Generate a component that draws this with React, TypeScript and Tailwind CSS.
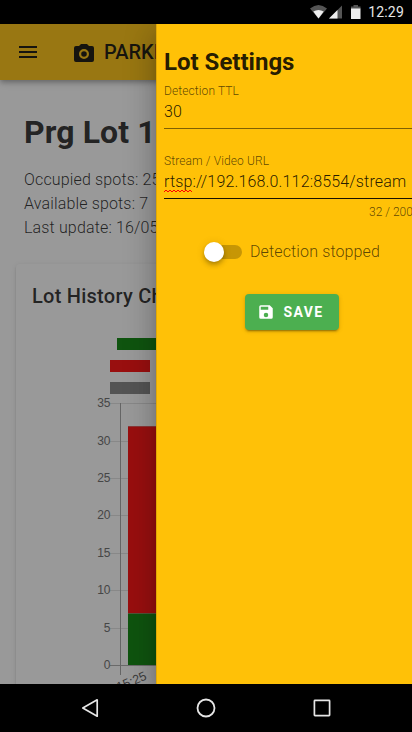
import React from 'react';

const ticks = [35, 30, 25, 20, 15, 10, 5, 0];
const yOf = (v: number) => Math.round(401 - v * 7.48) + 0.5;

function StatusBar() {
  return (
    <div className="flex h-6 shrink-0 items-center justify-end bg-black pr-2 text-[#e6e6e6]">
      <svg className="-mr-px" width="60" height="24" viewBox="0 0 60 24">
        <path d="M1 8.500Q9.500 1.500 18 8.500L9.500 18.500Z" fill="#555" />
        <path d="M4.300 11.500Q9.500 8.500 14.700 11.500L9.500 18.500Z" fill="#eee" />
        <path d="M20 18.500L33 5.500V18.500Z" fill="#555" />
        <path d="M20 18.500L28.500 10V18.500Z" fill="#eee" />
        <path d="M42 6.500H44.500V5H49V6.500H51.500V9H42Z" fill="#555" />
        <path d="M42 8.500H51.500V19H42Z" fill="#eee" />
      </svg>
      <span className="text-[14px] leading-6 tracking-[0.2px]">12:29</span>
    </div>
  );
}

function HistoryChart() {
  return (
    <svg className="block" width="364" height="420" viewBox="0 0 364 420">
      <rect x="85" y="74" width="40" height="12" fill="#008000" />
      <rect x="78" y="96" width="40" height="12" fill="#ff0000" />
      <rect x="78" y="118" width="40" height="12" fill="#808080" />
      {ticks.map((v) => (
        <g key={v}>
          <line x1="78" x2="364" y1={yOf(v)} y2={yOf(v)} stroke={v === 0 ? '#a8a8a8' : '#e0e0e0'} />
          <text x="78.500" y={yOf(v) + 3.5} textAnchor="end" fontSize="12" fill="#666" fontFamily="'Liberation Sans', Arial, sans-serif">{v}</text>
        </g>
      ))}
      <line x1="88.500" x2="88.500" y1="139" y2="411" stroke="#a0a0a0" />
      <rect x="96" y="162" width="90" height="187" fill="#ff0000" />
      <rect x="96" y="349" width="90" height="52" fill="#008000" />
      <path d="M96 162.500H186M96 349.500H186" stroke="#d08080" strokeOpacity=".6" />
      <text transform="translate(115.500 415) rotate(-23)" textAnchor="end" fontSize="12.500" fill="#555" fontFamily="'Liberation Sans', Arial, sans-serif">15:25</text>
    </svg>
  );
}

function LotPage() {
  return (
    <div className="h-full w-[412px] overflow-hidden bg-white text-black/[.87]">
      <header className="relative flex h-14 items-center bg-[#ffc107] pl-4 text-black/95 shadow-[0_2px_4px_-1px_rgba(0,0,0,.2),0_4px_5px_0_rgba(0,0,0,.14),0_1px_10px_0_rgba(0,0,0,.12)]">
        <svg width="24" height="24" viewBox="0 0 24 24" fill="currentColor"><path d="M3 6h18v2H3V6m0 5h18v2H3v-2m0 5h18v2H3v-2z" /></svg>
        <svg className="ml-8" width="24" height="24" viewBox="0 0 24 24" fill="currentColor">
          <path d="M4 4h3l2-2h6l2 2h3a2 2 0 0 1 2 2v12a2 2 0 0 1-2 2H4a2 2 0 0 1-2-2V6a2 2 0 0 1 2-2m8 3a5 5 0 0 0-5 5 5 5 0 0 0 5 5 5 5 0 0 0 5-5 5 5 0 0 0-5-5m0 2.200a2.800 2.800 0 0 1 0 5.600 2.800 2.800 0 0 1 0-5.600z" fillRule="evenodd" transform="translate(0 2)" />
        </svg>
        <span className="ml-2 text-[20px] font-medium leading-6">PARKING</span>
      </header>
      <main className="px-6 pt-7">
        <h1 className="text-[32px] font-bold leading-12 tracking-[0.1px]">Prg Lot 1</h1>
        <div className="mt-3 text-[16px] font-light leading-6 tracking-[0.15px]">
          <p>Occupied spots: 25</p>
          <p>Available spots: 7</p>
          <p>Last update: 16/05</p>
        </div>
      </main>
      <section className="mx-4 mt-6 h-[460px] rounded bg-white px-4 shadow-[0_3px_1px_-2px_rgba(0,0,0,.2),0_2px_2px_0_rgba(0,0,0,.14),0_1px_5px_0_rgba(0,0,0,.12)]">
        <h2 className="pt-4 text-[20px] font-medium leading-8 tracking-[0.25px]">Lot History Chart</h2>
        <div className="-mt-12">
          <HistoryChart />
        </div>
      </section>
    </div>
  );
}

function SettingsDrawer() {
  return (
    <aside className="absolute inset-y-0 left-[156px] w-64 bg-[#ffc107] text-black/[.87] shadow-[0_8px_10px_-5px_rgba(0,0,0,.2),0_16px_24px_2px_rgba(0,0,0,.14),0_6px_30px_5px_rgba(0,0,0,.12)]">
      <div className="h-full overflow-hidden border-l border-black/[.12] pl-[7px]">
        <h2 className="pt-5 text-[24px] font-bold leading-9">Lot Settings</h2>
        <label className="block text-[12px] font-light leading-[22px] tracking-[0.1px] text-black/65">Detection TTL</label>
        <div className="h-[27px] border-b border-black/50 text-[16px] font-light leading-5 tracking-[0.16px]">30</div>
        <label className="mt-[21px] block text-[12px] font-light leading-[22px] tracking-[0.1px] text-black/65">Stream / Video URL</label>
        <div className="relative h-[27px] border-b border-black/90 text-[16px] font-light leading-5 tracking-[0.16px]">
          rtsp://192.168.0.112:8554/stream
          <svg className="absolute left-0 top-[17px]" width="28" height="4" viewBox="0 0 28 4">
            <path d="M0 3l2-2 2 2 2-2 2 2 2-2 2 2 2-2 2 2 2-2 2 2 2-2 2 2 2-2 2 2" fill="none" stroke="#f00" />
          </svg>
        </div>
        <div className="ml-[205px] mt-[3px] whitespace-nowrap text-[12px] font-light leading-5 text-black/65">32 / 200</div>
        <div className="ml-10 mt-[18px] flex h-6 items-center">
          <div className="relative ml-0.5 h-[14px] w-9 rounded-full bg-black/[.22]">
            <span className="absolute -left-[2px] -top-[3px] size-5 rounded-full bg-white shadow-[0_2px_4px_-1px_rgba(0,0,0,.2),0_4px_5px_0_rgba(0,0,0,.14),0_1px_10px_0_rgba(0,0,0,.12)]" />
          </div>
          <span className="ml-2 text-[16px] font-light tracking-[0.13px] text-black/65">Detection stopped</span>
        </div>
        <button className="ml-[81px] mt-[30px] flex h-9 w-[94px] items-center rounded bg-[#4caf50] pl-3 text-white shadow-[0_3px_1px_-2px_rgba(0,0,0,.2),0_2px_2px_0_rgba(0,0,0,.14),0_1px_5px_0_rgba(0,0,0,.12)]">
          <svg width="18" height="18" viewBox="0 0 24 24" fill="currentColor"><path d="M15 9H5V5h10m-3 14a3 3 0 0 1-3-3 3 3 0 0 1 3-3 3 3 0 0 1 3 3 3 3 0 0 1-3 3m5-16H5a2 2 0 0 0-2 2v14a2 2 0 0 0 2 2h14a2 2 0 0 0 2-2V7l-4-4z" /></svg>
          <span className="ml-[8.5px] text-[14px] font-bold tracking-[1.35px]">SAVE</span>
        </button>
      </div>
    </aside>
  );
}

function NavigationBar() {
  return (
    <nav className="flex h-12 shrink-0 items-center justify-between bg-black px-[78px]">
      <svg width="24" height="24" viewBox="0 0 24 24" fill="none" stroke="#e6e6e6" strokeWidth="1.700" strokeLinejoin="round"><path d="M19.200 3.800V20.200L4.800 12Z" /></svg>
      <svg width="24" height="24" viewBox="0 0 24 24" fill="none" stroke="#e6e6e6" strokeWidth="1.800"><circle cx="12" cy="12" r="8.500" /></svg>
      <svg width="24" height="24" viewBox="0 0 24 24" fill="none" stroke="#e6e6e6" strokeWidth="1.700"><rect x="4.400" y="4.400" width="15.200" height="15.200" rx=".6" /></svg>
    </nav>
  );
}

export default function App() {
  return (
    <div className="flex h-[732px] w-[412px] flex-col overflow-hidden font-['Roboto',sans-serif]">
      <StatusBar />
      <div className="relative h-[660px] overflow-hidden">
        <LotPage />
        <div className="absolute inset-0 bg-[rgba(33,33,33,.46)]" />
        <SettingsDrawer />
      </div>
      <NavigationBar />
    </div>
  );
}
